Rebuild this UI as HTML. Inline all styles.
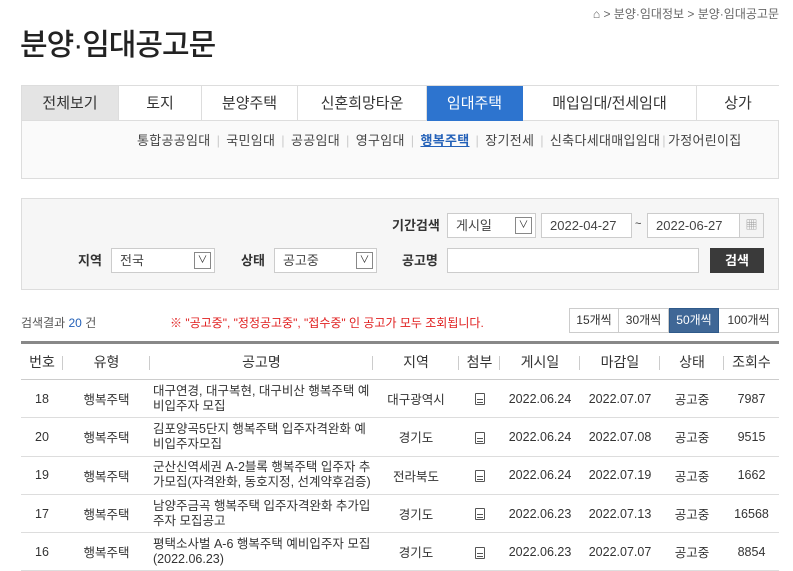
<!DOCTYPE html>
<html><head><meta charset="utf-8"><style>
*{margin:0;padding:0;box-sizing:border-box}
body{width:793px;height:571px;overflow:hidden;background:#fff;font-family:"Liberation Sans","Noto Sans CJK KR",sans-serif;color:#333;position:relative;font-size:13px}
.a{position:absolute}
.bc{right:14px;top:5px;font-size:12px;color:#666}
.title{left:20px;top:20px;font-size:30px;font-weight:500;color:#222;letter-spacing:-1px}
.tabs{left:21px;top:85px;width:758px;height:94px;border:1px solid #ddd;background:#fafafa}
.tab{position:absolute;top:0;height:35px;line-height:35px;text-align:center;font-size:15px;background:#fff;border-right:1px solid #ddd;border-bottom:1px solid #ddd;color:#333}
.sub{left:137px;top:130px;font-size:13px;color:#444;white-space:nowrap;letter-spacing:0.3px}
.sub span.s{color:#ccc;margin:0 6px}
.srch{left:21px;top:198px;width:758px;height:92px;border:1px solid #ddd;background:#f6f6f6}
.lbl{font-size:13px;font-weight:bold;color:#333;line-height:25px}
.inp{background:#fff;border:1px solid #ccc;height:25px;line-height:23px;padding-left:8px;font-size:13px;color:#444}
.dd{position:absolute;right:3px;top:3px;width:17px;height:17px;border:1px solid #888;font-size:10px;line-height:15px;text-align:center;color:#333}
table{position:absolute;left:21px;top:341px;width:758px;border-collapse:collapse;border-top:3px solid #888}
th{height:37px;font-size:14px;font-weight:normal;border-bottom:1px solid #ccc;color:#333;position:relative}
td{height:38.3px;border-bottom:1px solid #ddd;text-align:center;font-size:12.5px;color:#333}
td.t{text-align:left;padding-left:3px;line-height:15px}
th i{position:absolute;right:0;top:12px;height:14px;border-right:1px solid #ccc}
.ic{display:inline-block;width:10px;height:12px;border:1.5px solid #555;border-radius:1px;position:relative;vertical-align:middle}
.ic:after{content:"";position:absolute;left:1px;right:1px;top:5px;height:2px;border-top:1px solid #555;border-bottom:1px solid #555}
</style></head><body>
<div class="a bc">&#8962; &gt; 분양·임대정보 &gt; 분양·임대공고문</div>
<div class="a title">분양·임대공고문</div>
<div class="a tabs">
<div class="tab" style="left:0;width:97px;background:#e4e4e4">전체보기</div>
<div class="tab" style="left:97px;width:83px">토지</div>
<div class="tab" style="left:180px;width:96px">분양주택</div>
<div class="tab" style="left:276px;width:129px">신혼희망타운</div>
<div class="tab" style="left:405px;width:96px;background:#2d74cf;color:#fff;border-color:#2d74cf">임대주택</div>
<div class="tab" style="left:501px;width:174px">매입임대/전세임대</div>
<div class="tab" style="left:675px;width:82px;border-right:0">상가</div>
</div>
<div class="a sub">통합공공임대<span class="s">|</span>국민임대<span class="s">|</span>공공임대<span class="s">|</span>영구임대<span class="s">|</span><u style="color:#2461b8;font-weight:bold">행복주택</u><span class="s">|</span>장기전세<span class="s">|</span>신축다세대매입임대<span class="s" style="margin:0 2px">|</span>가정어린이집</div>
<div class="a srch"></div>
<div class="a lbl" style="left:392px;top:213px">기간검색</div>
<div class="a inp" style="left:447px;top:213px;width:89px">게시일<div class="dd">&#8744;</div></div>
<div class="a inp" style="left:541px;top:213px;width:91px">2022-04-27</div>
<div class="a" style="left:635px;top:218px;font-size:11px">~</div>
<div class="a inp" style="left:647px;top:213px;width:117px">2022-06-27<div style="position:absolute;right:0;top:0;width:24px;height:23px;border-left:1px solid #ccc;background:#f4f4f4;color:#999;text-align:center;font-size:12px">&#9638;</div></div>
<div class="a lbl" style="left:78px;top:248px">지역</div>
<div class="a inp" style="left:111px;top:248px;width:104px">전국<div class="dd">&#8744;</div></div>
<div class="a lbl" style="left:241px;top:248px">상태</div>
<div class="a inp" style="left:274px;top:248px;width:103px">공고중<div class="dd">&#8744;</div></div>
<div class="a lbl" style="left:402px;top:248px">공고명</div>
<div class="a inp" style="left:447px;top:248px;width:252px"></div>
<div class="a" style="left:710px;top:248px;width:54px;height:25px;background:#3a3a3a;color:#fff;text-align:center;line-height:25px;font-weight:bold">검색</div>
<div class="a" style="left:21px;top:314px;font-size:12px;color:#555">검색결과 <b style="color:#2461b8;font-weight:normal">20</b> 건</div>
<div class="a" style="left:170px;top:314px;font-size:12px;color:#e02020">※ "공고중", "정정공고중", "접수중" 인 공고가 모두 조회됩니다.</div>
<div class="a" style="left:569px;top:308px;height:25px;display:flex;font-size:12px;line-height:23px;text-align:center">
<div style="width:50px;border:1px solid #ccc">15개씩</div><div style="width:50px;border:1px solid #ccc;border-left:0">30개씩</div><div style="width:50px;border:1px solid #2f5a8a;background:#3f6796;color:#fff">50개씩</div><div style="width:60px;border:1px solid #ccc;border-left:0">100개씩</div></div>
<table>
<tr><th style="width:42px">번호<i></i></th><th style="width:87px">유형<i></i></th><th style="width:223px">공고명<i></i></th><th style="width:86px">지역<i></i></th><th style="width:41px">첨부<i></i></th><th style="width:80px">게시일<i></i></th><th style="width:80px">마감일<i></i></th><th style="width:64px">상태<i></i></th><th>조회수</th></tr>
<tr><td>18</td><td>행복주택</td><td class="t">대구연경, 대구복현, 대구비산 행복주택 예비입주자 모집</td><td>대구광역시</td><td><span class="ic"></span></td><td>2022.06.24</td><td>2022.07.07</td><td>공고중</td><td>7987</td></tr>
<tr><td>20</td><td>행복주택</td><td class="t">김포양곡5단지 행복주택 입주자격완화 예비입주자모집</td><td>경기도</td><td><span class="ic"></span></td><td>2022.06.24</td><td>2022.07.08</td><td>공고중</td><td>9515</td></tr>
<tr><td>19</td><td>행복주택</td><td class="t">군산신역세권 A-2블록 행복주택 입주자 추가모집(자격완화, 동호지정, 선계약후검증)</td><td>전라북도</td><td><span class="ic"></span></td><td>2022.06.24</td><td>2022.07.19</td><td>공고중</td><td>1662</td></tr>
<tr><td>17</td><td>행복주택</td><td class="t">남양주금곡 행복주택 입주자격완화 추가입주자 모집공고</td><td>경기도</td><td><span class="ic"></span></td><td>2022.06.23</td><td>2022.07.13</td><td>공고중</td><td>16568</td></tr>
<tr><td>16</td><td>행복주택</td><td class="t">평택소사벌 A-6 행복주택 예비입주자 모집(2022.06.23)</td><td>경기도</td><td><span class="ic"></span></td><td>2022.06.23</td><td>2022.07.07</td><td>공고중</td><td>8854</td></tr>
</table>
</body></html>
